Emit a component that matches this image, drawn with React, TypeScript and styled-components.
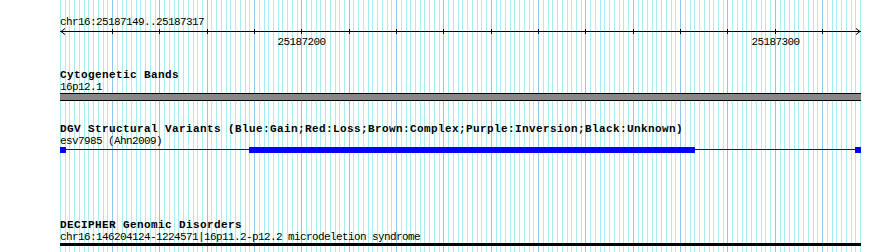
import React from "react";
import styled, { createGlobalStyle } from "styled-components";

const GlobalStyle = createGlobalStyle`
  html, body { margin: 0; padding: 0; background: #ffffff; }
  body { font-family: "Liberation Mono", "DejaVu Sans Mono", monospace; }
`;

const BASES = 169;
const WIDTH = 800;
const START = 25187149;
const px = (i: number) => Math.round((i * WIDTH) / BASES);

const Page = styled.div`
  width: 890px;
  height: 252px;
  overflow: hidden;
  padding-left: 60px;
  box-sizing: border-box;
`;

const Panel = styled.div`
  position: relative;
  width: 801px;
  height: 252px;
  display: flex;
  flex-direction: column;
`;

const GridSvg = styled.svg`
  position: absolute;
  left: 0;
  top: 0;
  z-index: 0;
`;

const Layer = styled.div`
  position: relative;
  z-index: 1;
  display: flex;
  flex-direction: column;
`;

const RulerBlock = styled.div`
  padding-top: 16px;
  display: flex;
  flex-direction: column;
`;

const TextLine = styled.div<{ $bold?: boolean }>`
  height: 12px;
  line-height: 12px;
  font-size: 11px;
  font-family: "Liberation Mono", "DejaVu Sans Mono", monospace;
  font-weight: ${(p) => (p.$bold ? 700 : 400)};
  letter-spacing: ${(p) => (p.$bold ? "0.4px" : "-0.6px")};
  color: #000;
  white-space: nowrap;
`;

const Track = styled.section<{ $gap: number }>`
  margin-top: ${(p) => p.$gap}px;
  display: flex;
  flex-direction: column;
`;

const BandBar = styled.div`
  width: 801px;
  height: 8px;
  box-sizing: border-box;
  background: #888888;
  border-top: 1px solid #000;
  border-bottom: 1px solid #000;
`;

const SolidBar = styled.div`
  width: 801px;
  height: 3px;
  background: #000;
`;

const Drawing = styled.svg`
  display: block;
  shape-rendering: crispEdges;
`;

const Grid: React.FC = () => {
  const lines = [];
  for (let i = 0; i <= BASES; i++) {
    const dark = i > 1 && i < BASES && (START + i) % 10 === 0;
    lines.push(
      <line
        key={i}
        x1={px(i) + 0.5}
        x2={px(i) + 0.5}
        y1={0}
        y2={252}
        stroke={dark ? "#8fc6ee" : "#aaeef0"}
        strokeWidth={1}
      />
    );
  }
  return (
    <GridSvg width={801} height={252} shapeRendering="crispEdges">
      {lines}
    </GridSvg>
  );
};

const Ruler: React.FC = () => {
  const ticks = [];
  for (let i = 11; i < BASES; i += 10) {
    ticks.push(
      <line key={i} x1={px(i) + 0.5} x2={px(i) + 0.5} y1={1} y2={6} stroke="#000" />
    );
  }
  const labels = [51, 151].map((i) => (
    <text
      key={i}
      x={px(i) + 0.5}
      y={17}
      textAnchor="middle"
      fontFamily='"Liberation Mono", monospace'
      fontSize={11}
      letterSpacing={-0.6}
      fill="#000"
    >
      {START + i}
    </text>
  ));
  return (
    <Drawing width={801} height={20}>
      <line x1={0} x2={801} y1={3.5} y2={3.5} stroke="#000" />
      <path d="M5 0.5 L1 3.5 L5 6.5" stroke="#000" fill="none" shapeRendering="auto" />
      <path d="M796 0.5 L800 3.5 L796 6.5" stroke="#000" fill="none" shapeRendering="auto" />
      {ticks}
      {labels}
    </Drawing>
  );
};

const DgvFeature: React.FC = () => (
  <Drawing width={801} height={6}>
    <rect x={0} y={2} width={801} height={1} fill="#0000ff" />
    <rect x={0} y={0} width={6} height={6} fill="#0000ff" />
    <rect x={189} y={0} width={446} height={6} fill="#0000ff" />
    <rect x={795} y={0} width={6} height={6} fill="#0000ff" />
  </Drawing>
);

export default function App() {
  return (
    <>
      <GlobalStyle />
      <Page>
        <Panel>
          <Grid />
          <Layer>
            <RulerBlock>
              <TextLine>chr16:25187149..25187317</TextLine>
              <Ruler />
            </RulerBlock>
            <Track $gap={21}>
              <TextLine $bold>Cytogenetic Bands</TextLine>
              <TextLine>16p12.1</TextLine>
              <BandBar />
            </Track>
            <Track $gap={22}>
              <TextLine $bold>
                DGV Structural Variants (Blue:Gain;Red:Loss;Brown:Complex;Purple:Inversion;Black:Unknown)
              </TextLine>
              <TextLine>esv7985 (Ahn2009)</TextLine>
              <DgvFeature />
            </Track>
            <Track $gap={66}>
              <TextLine $bold>DECIPHER Genomic Disorders</TextLine>
              <TextLine>chr16:146204124-1224571|16p11.2-p12.2 microdeletion syndrome</TextLine>
              <SolidBar />
            </Track>
          </Layer>
        </Panel>
      </Page>
    </>
  );
}
